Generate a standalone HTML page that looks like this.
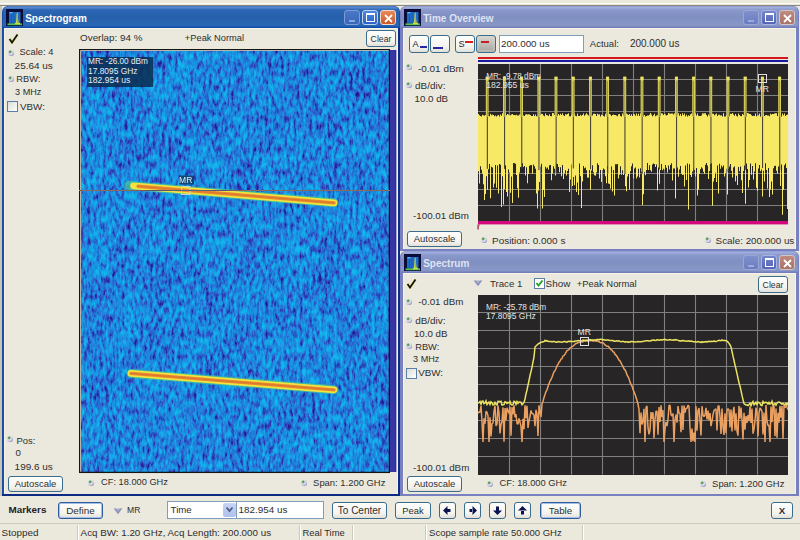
<!DOCTYPE html><html><head><meta charset="utf-8"><style>
*{margin:0;padding:0;box-sizing:border-box}
html,body{width:800px;height:540px;overflow:hidden;background:#ebe8dd;font-family:"Liberation Sans",sans-serif;color:#222}
.a{position:absolute}
.t{position:absolute;white-space:nowrap;line-height:1;color:#2e2e2e}
.btn{position:absolute;border:1px solid #3c6c8c;border-radius:3px;background:linear-gradient(#fefefc,#f4f3ee 70%,#e2e0d6);font-size:10px;color:#2a2a2a;text-align:center;white-space:nowrap;line-height:1}
.dot{position:absolute;width:6px;height:6px;border-radius:50%;background:radial-gradient(circle at 35% 30%,#2a8a3a 0,#70a868 16%,#e0e0f0 36%,#c8c4e0 60%,#5a54a8 88%,#6a64b0 100%)}
.chk{position:absolute;width:11px;height:11px;border:1px solid #5a7fa8;background:linear-gradient(135deg,#dcdcd6,#fff)}
.tb{position:absolute;width:16px;height:15px;border:1px solid #fff;border-radius:3px}
</style></head><body><div class="a" style="left:0;top:0;width:800px;height:6px;background:#ebe8dc"></div><div class="a" style="left:0;top:3px;width:800px;height:1px;background:#fcfaf4"></div><div class="a" style="left:0;top:5px;width:800px;height:1px;background:#8a8880"></div><div class="a" style="left:0;top:6px;width:2px;height:490px;background:#c8c4b8"></div><div class="a" style="left:2px;top:6px;width:398px;height:490px;background:#1a4ea6;border-radius:6px 6px 0 0"></div><div class="a" style="left:4px;top:28px;width:394px;height:466px;background:#ebe8dd;border-top:1px solid #f8f4e8;border-left:1px solid #f6f2e6;border-right:1px solid #f6f2e6"></div><div class="a" style="left:3px;top:6px;width:396px;height:22px;background:linear-gradient(#3c70c0 0,#5a8ad0 7%,#2c66b4 18%,#2660aa 50%,#2868b4 88%,#0c48a8 100%);border-radius:6px 6px 0 0"></div><svg class="a" style="left:6px;top:9px" width="17" height="17" viewBox="0 0 17 17">
<rect width="17" height="17" fill="#0c0c3a"/>
<rect x="3" y="3" width="11.5" height="11.5" fill="#1f6cc4"/>
<rect x="5" y="3.5" width="1" height="11" fill="#1a58b0"/>
<rect x="7.5" y="3.5" width="1" height="11" fill="#1a5cb4"/>
<rect x="3.5" y="3" width="3" height="1.4" fill="#5ab8f0"/>
<path d="M9.3 14.8 Q10.4 13.5 10.6 5 L11.2 3 L11.8 5 Q12 13.5 13.3 14.8Z" fill="#d8dc40"/>
<path d="M10.9 14 L11.1 5 L11.5 5 L11.6 14Z" fill="#40a0d8"/>
<rect x="1.5" y="14.4" width="14.5" height="1.8" fill="#58c050"/>
<rect x="9" y="14" width="5" height="1.3" fill="#c8e040"/>
</svg><div class="t" style="left:25.20px;top:14.04px;font-size:10.00px;color:#fff;font-weight:bold;letter-spacing:0px">Spectrogram</div><div class="tb" style="left:344px;top:10px;background:linear-gradient(#4a78c8,#3a66b8);border-color:#7f9cd4"><div class="a" style="left:4px;top:9px;width:6px;height:2px;background:#88a8dc"></div></div><div class="tb" style="left:362px;top:10px;background:linear-gradient(#4c86e0,#2c62c8);border-color:#c0d4f0"><div class="a" style="left:3px;top:2px;width:9px;height:9px;border:1px solid #fff;border-top-width:2px"></div></div><div class="tb" style="left:380px;top:10px;background:linear-gradient(#e88a5a,#c85a2a);border-color:#f4d8c8"><svg class="a" style="left:2px;top:1.5px" width="11" height="11"><path d="M2 2L9 9M9 2L2 9" stroke="#fff" stroke-width="1.8"/></svg></div><div class="a" style="left:398px;top:28px;width:2px;height:468px;background:#0c2c88"></div><div class="a" style="left:2px;top:494px;width:398px;height:2px;background:#0c2a84"></div><div class="a" style="left:400px;top:6px;width:399px;height:245px;background:#7880c0;border-radius:6px 6px 0 0"></div><div class="a" style="left:403px;top:28px;width:393px;height:221px;background:#ebe8dd;border-top:1px solid #f8f4e8;border-left:1px solid #f6f2e6;border-right:1px solid #f6f2e6"></div><div class="a" style="left:401px;top:6px;width:397px;height:22px;background:linear-gradient(#8a98d0 0,#a0aedc 7%,#8a98cc 18%,#7f8fc0 50%,#8898c8 88%,#6e78b8 100%);border-radius:6px 6px 0 0"></div><svg class="a" style="left:404px;top:9px" width="17" height="17" viewBox="0 0 17 17">
<rect width="17" height="17" fill="#0c0c3a"/>
<rect x="3" y="3" width="11.5" height="11.5" fill="#1f6cc4"/>
<rect x="5" y="3.5" width="1" height="11" fill="#1a58b0"/>
<rect x="7.5" y="3.5" width="1" height="11" fill="#1a5cb4"/>
<rect x="3.5" y="3" width="3" height="1.4" fill="#5ab8f0"/>
<path d="M9.3 14.8 Q10.4 13.5 10.6 5 L11.2 3 L11.8 5 Q12 13.5 13.3 14.8Z" fill="#d8dc40"/>
<path d="M10.9 14 L11.1 5 L11.5 5 L11.6 14Z" fill="#40a0d8"/>
<rect x="1.5" y="14.4" width="14.5" height="1.8" fill="#58c050"/>
<rect x="9" y="14" width="5" height="1.3" fill="#c8e040"/>
</svg><div class="t" style="left:423.20px;top:14.04px;font-size:10.00px;color:#dfe3f4;font-weight:bold;letter-spacing:0px">Time Overview</div><div class="tb" style="left:743px;top:10px;background:linear-gradient(#8090cc,#6a7cc0);border-color:#98a6d8"><div class="a" style="left:4px;top:9px;width:6px;height:2px;background:#a0acd8"></div></div><div class="tb" style="left:761px;top:10px;background:linear-gradient(#7484cc,#5464b8);border-color:#a8b4e0"><div class="a" style="left:3px;top:2px;width:9px;height:9px;border:1px solid #fff;border-top-width:2px"></div></div><div class="tb" style="left:779px;top:10px;background:linear-gradient(#c08a80,#a87266);border-color:#d8c4c4"><svg class="a" style="left:2px;top:1.5px" width="11" height="11"><path d="M2 2L9 9M9 2L2 9" stroke="#fff" stroke-width="1.8"/></svg></div><div class="a" style="left:400px;top:251px;width:399px;height:245px;background:#7880c0;border-radius:6px 6px 0 0"></div><div class="a" style="left:403px;top:273px;width:393px;height:221px;background:#ebe8dd;border-top:1px solid #f8f4e8;border-left:1px solid #f6f2e6;border-right:1px solid #f6f2e6"></div><div class="a" style="left:401px;top:251px;width:397px;height:22px;background:linear-gradient(#8a98d0 0,#a0aedc 7%,#8a98cc 18%,#7f8fc0 50%,#8898c8 88%,#6e78b8 100%);border-radius:6px 6px 0 0"></div><svg class="a" style="left:404px;top:254px" width="17" height="17" viewBox="0 0 17 17">
<rect width="17" height="17" fill="#0c0c3a"/>
<rect x="3" y="3" width="11.5" height="11.5" fill="#1f6cc4"/>
<rect x="5" y="3.5" width="1" height="11" fill="#1a58b0"/>
<rect x="7.5" y="3.5" width="1" height="11" fill="#1a5cb4"/>
<rect x="3.5" y="3" width="3" height="1.4" fill="#5ab8f0"/>
<path d="M9.3 14.8 Q10.4 13.5 10.6 5 L11.2 3 L11.8 5 Q12 13.5 13.3 14.8Z" fill="#d8dc40"/>
<path d="M10.9 14 L11.1 5 L11.5 5 L11.6 14Z" fill="#40a0d8"/>
<rect x="1.5" y="14.4" width="14.5" height="1.8" fill="#58c050"/>
<rect x="9" y="14" width="5" height="1.3" fill="#c8e040"/>
</svg><div class="t" style="left:423.20px;top:259.04px;font-size:10.00px;color:#dfe3f4;font-weight:bold;letter-spacing:0px">Spectrum</div><div class="tb" style="left:743px;top:255px;background:linear-gradient(#8090cc,#6a7cc0);border-color:#98a6d8"><div class="a" style="left:4px;top:9px;width:6px;height:2px;background:#a0acd8"></div></div><div class="tb" style="left:761px;top:255px;background:linear-gradient(#7484cc,#5464b8);border-color:#a8b4e0"><div class="a" style="left:3px;top:2px;width:9px;height:9px;border:1px solid #fff;border-top-width:2px"></div></div><div class="tb" style="left:779px;top:255px;background:linear-gradient(#c08a80,#a87266);border-color:#d8c4c4"><svg class="a" style="left:2px;top:1.5px" width="11" height="11"><path d="M2 2L9 9M9 2L2 9" stroke="#fff" stroke-width="1.8"/></svg></div><svg class="a" style="left:7.5px;top:33px" width="11" height="11"><path d="M1.5 6 L4 9.5 L9.5 1.5" fill="none" stroke="#d8c800" stroke-width="2.6" opacity=".55"/><path d="M1.5 6 L4 9.5 L9.5 1.5" fill="none" stroke="#101010" stroke-width="1.6"/></svg><div class="dot" style="left:8px;top:50px"></div><div class="t" style="left:19.60px;top:47.58px;font-size:9.35px;">Scale: 4</div><div class="t" style="left:14.60px;top:60.55px;font-size:9.98px;">25.64 us</div><div class="dot" style="left:8px;top:76px"></div><div class="t" style="left:16.35px;top:75.13px;font-size:9.29px;">RBW:</div><div class="t" style="left:15.10px;top:88.29px;font-size:9.10px;">3 MHz</div><div class="chk" style="left:7px;top:101px"></div><div class="t" style="left:20.10px;top:101.73px;font-size:9.77px;">VBW:</div><div class="t" style="left:80.10px;top:33.18px;font-size:9.83px;">Overlap: 94 %</div><div class="t" style="left:184.85px;top:33.61px;font-size:9.32px;">+Peak Normal</div><div class="btn" style="left:366px;top:30px;width:30px;height:17px;"><div class="t" style="left:0;width:100%;top:4.13px;font-size:8.70px;text-align:center">Clear</div></div><div class="dot" style="left:7px;top:436px"></div><div class="t" style="left:16.60px;top:436.05px;font-size:9.40px;">Pos:</div><div class="t" style="left:15.60px;top:447.79px;font-size:9.70px;">0</div><div class="t" style="left:14.60px;top:461.55px;font-size:9.98px;">199.6 us</div><div class="btn" style="left:8px;top:476px;width:55px;height:16px;"><div class="t" style="left:0;width:100%;top:2.06px;font-size:9.50px;text-align:center">Autoscale</div></div><div class="dot" style="left:88px;top:480px"></div><div class="t" style="left:101.10px;top:478.17px;font-size:9.25px;">CF: 18.000 GHz</div><div class="dot" style="left:301px;top:480px"></div><div class="t" style="left:313.10px;top:478.02px;font-size:9.43px;">Span: 1.200 GHz</div><svg class="a" style="left:79px;top:49px" width="318" height="425" viewBox="79 49 318 425">
<defs>
<filter id="nz" x="0" y="0" width="100%" height="100%" color-interpolation-filters="sRGB">
<feTurbulence type="fractalNoise" baseFrequency="0.32 0.13" numOctaves="3" seed="5" result="f0"/>
<feColorMatrix in="f0" type="matrix" values="1 0 0 0 0  1 0 0 0 0  1 0 0 0 0  0 0 0 0 1" result="f"/>
<feTurbulence type="fractalNoise" baseFrequency="0.035 0.03" numOctaves="2" seed="9" result="c0"/>
<feColorMatrix in="c0" type="matrix" values="1 0 0 0 0  1 0 0 0 0  1 0 0 0 0  0 0 0 0 1" result="c"/>
<feComposite in="f" in2="c" operator="arithmetic" k1="0" k2="0.9" k3="0.25" k4="-0.075" result="m"/>
<feColorMatrix in="m" type="matrix" values="1.7 0 0 0 -0.31  1.7 0 0 0 -0.31  1.7 0 0 0 -0.31  0 0 0 0 1"/>
<feComponentTransfer>
<feFuncR type="table" tableValues="0.14 0.18 0.15 0.11 0.08 0.07"/>
<feFuncG type="table" tableValues="0.10 0.26 0.43 0.56 0.65 0.73"/>
<feFuncB type="table" tableValues="0.55 0.72 0.83 0.88 0.91 0.93"/>
</feComponentTransfer>
<feGaussianBlur stdDeviation="0.45"/>
</filter>
<filter id="bl" x="-10%" y="-100%" width="120%" height="300%"><feGaussianBlur stdDeviation="0.7"/></filter>
</defs>
<rect x="81" y="51" width="309" height="421" filter="url(#nz)"/>
<rect x="390" y="50" width="6" height="422" fill="#3836a6"/><rect x="395.5" y="50" width="0.8" height="422" fill="#1a2890"/>
<rect x="79.6" y="49.6" width="309.8" height="422.8" fill="none" stroke="#151515" stroke-width="1.3"/>
<g filter="url(#bl)"><line x1="129.0" y1="185.50" x2="334" y2="202.85" stroke="#44c49a" stroke-width="9" stroke-linecap="round" opacity="0.8"/><line x1="133.5" y1="185.87" x2="334" y2="202.85" stroke="#f2e43e" stroke-width="6.6" stroke-linecap="round" opacity="1"/><line x1="138.0" y1="186.25" x2="334" y2="202.85" stroke="#e68a32" stroke-width="3.4" stroke-linecap="round" opacity="1"/><line x1="138.0" y1="186.25" x2="334" y2="202.85" stroke="#dc7028" stroke-width="1.2" stroke-linecap="round" opacity="0.7"/><line x1="131.0" y1="373.40" x2="334" y2="389.85" stroke="#44c49a" stroke-width="9" stroke-linecap="round" opacity="0.8"/><line x1="131.0" y1="373.40" x2="334" y2="389.85" stroke="#f2e43e" stroke-width="6.6" stroke-linecap="round" opacity="1"/><line x1="131.0" y1="373.40" x2="334" y2="389.85" stroke="#e68a32" stroke-width="3.4" stroke-linecap="round" opacity="1"/><line x1="131.0" y1="373.40" x2="334" y2="389.85" stroke="#dc7028" stroke-width="1.2" stroke-linecap="round" opacity="0.7"/></g>

<rect x="87" y="57" width="66" height="30" fill="#0a2c50" opacity=".85"/>
<rect x="179" y="175.5" width="15" height="9" fill="#0c3860" opacity=".8"/>
<rect x="181.5" y="186.5" width="8.5" height="8" fill="none" stroke="#d0d0d0" stroke-width="1"/>
</svg><div class="t" style="left:88.10px;top:58.05px;font-size:8.21px;color:#e8eef4;">MR: -26.00 dBm</div><div class="t" style="left:88.10px;top:67.42px;font-size:8.37px;color:#e8eef4;">17.8095 GHz</div><div class="t" style="left:88.10px;top:76.16px;font-size:8.55px;color:#e8eef4;">182.954 us</div><div class="t" style="left:179.10px;top:176.30px;font-size:8.50px;color:#e8eef4;">MR</div><div class="a" style="left:79px;top:190px;width:311px;height:1px;background:#e8e0e0;mix-blend-mode:difference;opacity:.65"></div><div class="btn" style="left:409px;top:35px;width:20px;height:18px;background:linear-gradient(#fefefc,#f4f3ee 70%,#e2e0d6);text-align:left"><div class="t" style="left:2.60px;top:4.21px;font-size:9.20px;color:#1e1e1e;">A</div><div class="a" style="left:9.5px;top:10px;width:7.5px;height:2px;background:#2828a0"></div></div><div class="btn" style="left:430px;top:35px;width:20px;height:18px;background:linear-gradient(#fefefc,#f4f3ee 70%,#e2e0d6);text-align:left"><div class="a" style="left:1.5px;top:11px;width:10px;height:2px;background:#2828a0"></div></div><div class="btn" style="left:455px;top:35px;width:20px;height:18px;background:linear-gradient(#fefefc,#f4f3ee 70%,#e2e0d6);text-align:left"><div class="t" style="left:2.60px;top:4.21px;font-size:9.20px;color:#1e1e1e;">S</div><div class="a" style="left:9px;top:4.5px;width:8px;height:2px;background:#d82020"></div></div><div class="btn" style="left:476px;top:35px;width:20px;height:18px;background:linear-gradient(#d8d6d0,#b8b6b0);text-align:left"><div class="a" style="left:2px;top:2px;width:14px;height:12px;background:linear-gradient(#d4d2cc,#aeaca6)"></div><div class="a" style="left:4px;top:4.5px;width:8px;height:2px;background:#c82020"></div></div><div class="a" style="left:499px;top:35px;width:85px;height:18px;border:1px solid #7f9db9;background:#fff"></div><div class="t" style="left:501.10px;top:38.99px;font-size:9.82px;">200.000 us</div><div class="t" style="left:589.80px;top:39.44px;font-size:9.52px;">Actual:</div><div class="t" style="left:629.90px;top:39.03px;font-size:10.00px;">200.000 us</div><div class="dot" style="left:406px;top:64px"></div><div class="t" style="left:417.90px;top:63.76px;font-size:9.97px;">-0.01 dBm</div><div class="dot" style="left:406px;top:82px"></div><div class="t" style="left:415.10px;top:80.81px;font-size:9.91px;">dB/div:</div><div class="t" style="left:414.60px;top:94.17px;font-size:9.72px;">10.0 dB</div><div class="t" style="left:413.10px;top:210.75px;font-size:9.75px;">-100.01 dBm</div><div class="btn" style="left:407px;top:231px;width:55px;height:16px;"><div class="t" style="left:0;width:100%;top:2.06px;font-size:9.50px;text-align:center">Autoscale</div></div><div class="dot" style="left:481px;top:237px"></div><div class="t" style="left:492.10px;top:235.61px;font-size:9.91px;">Position: 0.000 s</div><div class="dot" style="left:704.5px;top:237px"></div><div class="t" style="left:715.60px;top:235.67px;font-size:9.84px;">Scale: 200.000 us</div><svg class="a" style="left:470px;top:50px" width="330" height="180" viewBox="470 50 330 180">
<rect x="478" y="57" width="310" height="2" fill="#d81818"/>
<rect x="478" y="60" width="310" height="2" fill="#1818a0"/>
<rect x="478" y="64" width="310" height="157" fill="#272526"/>
<g stroke="#808080" stroke-width="1.1"><line x1="509.5" y1="64" x2="509.5" y2="221"/><line x1="540.5" y1="64" x2="540.5" y2="221"/><line x1="571.5" y1="64" x2="571.5" y2="221"/><line x1="602.5" y1="64" x2="602.5" y2="221"/><line x1="633.5" y1="64" x2="633.5" y2="221"/><line x1="664.5" y1="64" x2="664.5" y2="221"/><line x1="695.5" y1="64" x2="695.5" y2="221"/><line x1="726.5" y1="64" x2="726.5" y2="221"/><line x1="757.5" y1="64" x2="757.5" y2="221"/><line x1="478" y1="79.5" x2="788" y2="79.5"/><line x1="478" y1="95.5" x2="788" y2="95.5"/><line x1="478" y1="111.5" x2="788" y2="111.5"/><line x1="478" y1="126.5" x2="788" y2="126.5"/><line x1="478" y1="142.5" x2="788" y2="142.5"/><line x1="478" y1="158.5" x2="788" y2="158.5"/><line x1="478" y1="173.5" x2="788" y2="173.5"/><line x1="478" y1="189.5" x2="788" y2="189.5"/><line x1="478" y1="205.5" x2="788" y2="205.5"/></g>
<polygon points="478,113.9 479,113.9 479,115.2 480,115.2 480,116.0 481,116.0 481,116.6 482,116.6 482,114.7 483,114.7 483,115.3 484,115.3 484,115.7 485,115.7 485,115.1 486,115.1 486,114.7 487,114.7 487,115.6 488,115.6 488,115.9 489,115.9 489,116.2 490,116.2 490,113.8 491,113.8 491,115.3 492,115.3 492,114.4 493,114.4 493,115.1 494,115.1 494,116.3 495,116.3 495,115.4 496,115.4 496,116.5 497,116.5 497,115.6 498,115.6 498,115.1 499,115.1 499,116.6 500,116.6 500,114.5 501,114.5 501,115.8 502,115.8 502,113.2 503,113.2 503,116.2 504,116.2 504,116.6 505,116.6 505,113.1 506,113.1 506,115.2 507,115.2 507,114.1 508,114.1 508,114.4 509,114.4 509,115.3 510,115.3 510,115.2 511,115.2 511,114.6 512,114.6 512,114.1 513,114.1 513,115.0 514,115.0 514,115.1 515,115.1 515,115.3 516,115.3 516,114.7 517,114.7 517,115.5 518,115.5 518,115.4 519,115.4 519,114.6 520,114.6 520,114.3 521,114.3 521,115.1 522,115.1 522,115.8 523,115.8 523,115.6 524,115.6 524,115.9 525,115.9 525,114.6 526,114.6 526,114.2 527,114.2 527,114.6 528,114.6 528,114.2 529,114.2 529,114.6 530,114.6 530,114.9 531,114.9 531,116.0 532,116.0 532,115.9 533,115.9 533,114.2 534,114.2 534,115.9 535,115.9 535,114.5 536,114.5 536,116.3 537,116.3 537,116.2 538,116.2 538,116.4 539,116.4 539,115.7 540,115.7 540,114.9 541,114.9 541,113.8 542,113.8 542,114.0 543,114.0 543,115.5 544,115.5 544,116.2 545,116.2 545,113.6 546,113.6 546,114.9 547,114.9 547,115.2 548,115.2 548,116.1 549,116.1 549,114.3 550,114.3 550,115.9 551,115.9 551,116.3 552,116.3 552,113.0 553,113.0 553,113.2 554,113.2 554,114.9 555,114.9 555,115.8 556,115.8 556,113.4 557,113.4 557,116.1 558,116.1 558,114.1 559,114.1 559,115.3 560,115.3 560,113.7 561,113.7 561,115.0 562,115.0 562,113.3 563,113.3 563,115.2 564,115.2 564,115.9 565,115.9 565,114.3 566,114.3 566,114.5 567,114.5 567,113.9 568,113.9 568,113.3 569,113.3 569,116.2 570,116.2 570,116.2 571,116.2 571,114.7 572,114.7 572,115.4 573,115.4 573,115.4 574,115.4 574,113.4 575,113.4 575,115.8 576,115.8 576,116.2 577,116.2 577,113.4 578,113.4 578,116.0 579,116.0 579,115.9 580,115.9 580,114.8 581,114.8 581,115.7 582,115.7 582,115.0 583,115.0 583,113.6 584,113.6 584,115.7 585,115.7 585,114.4 586,114.4 586,113.3 587,113.3 587,114.5 588,114.5 588,115.5 589,115.5 589,114.9 590,114.9 590,116.2 591,116.2 591,116.3 592,116.3 592,115.6 593,115.6 593,113.7 594,113.7 594,113.8 595,113.8 595,114.1 596,114.1 596,116.1 597,116.1 597,113.8 598,113.8 598,114.4 599,114.4 599,114.2 600,114.2 600,116.6 601,116.6 601,114.7 602,114.7 602,115.0 603,115.0 603,116.1 604,116.1 604,116.5 605,116.5 605,113.8 606,113.8 606,116.5 607,116.5 607,113.7 608,113.7 608,115.5 609,115.5 609,113.9 610,113.9 610,114.5 611,114.5 611,116.0 612,116.0 612,115.1 613,115.1 613,114.6 614,114.6 614,115.1 615,115.1 615,115.0 616,115.0 616,115.4 617,115.4 617,116.3 618,116.3 618,114.3 619,114.3 619,114.1 620,114.1 620,115.9 621,115.9 621,116.5 622,116.5 622,113.4 623,113.4 623,115.6 624,115.6 624,113.7 625,113.7 625,113.6 626,113.6 626,113.4 627,113.4 627,114.2 628,114.2 628,115.0 629,115.0 629,114.1 630,114.1 630,115.7 631,115.7 631,114.3 632,114.3 632,116.1 633,116.1 633,113.9 634,113.9 634,114.2 635,114.2 635,115.8 636,115.8 636,113.4 637,113.4 637,115.8 638,115.8 638,113.7 639,113.7 639,115.9 640,115.9 640,113.5 641,113.5 641,114.9 642,114.9 642,113.9 643,113.9 643,116.2 644,116.2 644,115.0 645,115.0 645,116.5 646,116.5 646,116.1 647,116.1 647,115.6 648,115.6 648,115.4 649,115.4 649,114.7 650,114.7 650,113.1 651,113.1 651,114.6 652,114.6 652,116.2 653,116.2 653,115.2 654,115.2 654,113.8 655,113.8 655,116.3 656,116.3 656,115.5 657,115.5 657,115.2 658,115.2 658,115.7 659,115.7 659,116.4 660,116.4 660,115.7 661,115.7 661,113.2 662,113.2 662,113.6 663,113.6 663,114.9 664,114.9 664,114.1 665,114.1 665,114.4 666,114.4 666,115.6 667,115.6 667,114.9 668,114.9 668,113.0 669,113.0 669,113.5 670,113.5 670,113.8 671,113.8 671,113.6 672,113.6 672,113.6 673,113.6 673,114.6 674,114.6 674,113.2 675,113.2 675,113.1 676,113.1 676,113.3 677,113.3 677,115.2 678,115.2 678,113.2 679,113.2 679,115.8 680,115.8 680,114.1 681,114.1 681,115.9 682,115.9 682,113.3 683,113.3 683,115.1 684,115.1 684,113.6 685,113.6 685,116.2 686,116.2 686,114.7 687,114.7 687,116.4 688,116.4 688,115.2 689,115.2 689,116.1 690,116.1 690,114.2 691,114.2 691,113.6 692,113.6 692,116.0 693,116.0 693,114.3 694,114.3 694,115.8 695,115.8 695,113.6 696,113.6 696,115.6 697,115.6 697,113.6 698,113.6 698,115.7 699,115.7 699,116.0 700,116.0 700,116.1 701,116.1 701,115.6 702,115.6 702,113.3 703,113.3 703,113.4 704,113.4 704,113.3 705,113.3 705,113.2 706,113.2 706,115.1 707,115.1 707,116.5 708,116.5 708,114.5 709,114.5 709,115.8 710,115.8 710,113.6 711,113.6 711,113.4 712,113.4 712,113.7 713,113.7 713,113.8 714,113.8 714,115.3 715,115.3 715,114.2 716,114.2 716,113.4 717,113.4 717,115.9 718,115.9 718,114.7 719,114.7 719,114.7 720,114.7 720,115.6 721,115.6 721,115.2 722,115.2 722,116.6 723,116.6 723,113.3 724,113.3 724,116.4 725,116.4 725,116.6 726,116.6 726,114.9 727,114.9 727,116.3 728,116.3 728,115.8 729,115.8 729,116.3 730,116.3 730,113.7 731,113.7 731,114.1 732,114.1 732,113.1 733,113.1 733,114.6 734,114.6 734,115.7 735,115.7 735,114.1 736,114.1 736,115.7 737,115.7 737,116.5 738,116.5 738,113.6 739,113.6 739,114.9 740,114.9 740,116.1 741,116.1 741,116.2 742,116.2 742,113.9 743,113.9 743,114.9 744,114.9 744,113.2 745,113.2 745,114.7 746,114.7 746,116.5 747,116.5 747,113.0 748,113.0 748,113.2 749,113.2 749,113.9 750,113.9 750,113.9 751,113.9 751,115.3 752,115.3 752,115.9 753,115.9 753,115.7 754,115.7 754,116.0 755,116.0 755,113.6 756,113.6 756,116.2 757,116.2 757,115.4 758,115.4 758,115.2 759,115.2 759,113.6 760,113.6 760,116.6 761,116.6 761,114.3 762,114.3 762,114.6 763,114.6 763,114.1 764,114.1 764,116.1 765,116.1 765,115.2 766,115.2 766,115.0 767,115.0 767,115.6 768,115.6 768,115.4 769,115.4 769,116.2 770,116.2 770,113.7 771,113.7 771,114.4 772,114.4 772,114.0 773,114.0 773,114.1 774,114.1 774,113.5 775,113.5 775,113.3 776,113.3 776,113.3 777,113.3 777,116.0 778,116.0 778,113.0 779,113.0 779,113.2 780,113.2 780,114.0 781,114.0 781,116.4 782,116.4 782,113.6 783,113.6 783,115.3 784,115.3 784,113.6 785,113.6 785,116.1 786,116.1 786,114.9 787,114.9 787,114.4 788,114.4 788,209.0 787,209.0 787,168.1 786,168.1 786,163.5 785,163.5 785,165.2 784,165.2 784,189.8 783,189.8 783,214.8 782,214.8 782,164.6 781,164.6 781,186.0 780,186.0 780,166.3 779,166.3 779,166.5 778,166.5 778,173.5 777,173.5 777,170.8 776,170.8 776,165.7 775,165.7 775,166.0 774,166.0 774,168.2 773,168.2 773,194.4 772,194.4 772,181.5 771,181.5 771,189.6 770,189.6 770,196.9 769,196.9 769,167.9 768,167.9 768,188.5 767,188.5 767,170.0 766,170.0 766,163.3 765,163.3 765,181.5 764,181.5 764,170.8 763,170.8 763,196.6 762,196.6 762,169.4 761,169.4 761,171.3 760,171.3 760,165.1 759,165.1 759,168.6 758,168.6 758,190.7 757,190.7 757,187.8 756,187.8 756,163.2 755,163.2 755,171.4 754,171.4 754,179.4 753,179.4 753,166.0 752,166.0 752,174.8 751,174.8 751,163.5 750,163.5 750,180.0 749,180.0 749,187.5 748,187.5 748,168.9 747,168.9 747,163.4 746,163.4 746,203.7 745,203.7 745,165.4 744,165.4 744,171.1 743,171.1 743,192.9 742,192.9 742,180.3 741,180.3 741,166.5 740,166.5 740,171.2 739,171.2 739,166.9 738,166.9 738,184.9 737,184.9 737,175.7 736,175.7 736,181.6 735,181.6 735,166.6 734,166.6 734,167.4 733,167.4 733,177.4 732,177.4 732,170.7 731,170.7 731,164.1 730,164.1 730,166.6 729,166.6 729,168.5 728,168.5 728,194.4 727,194.4 727,168.7 726,168.7 726,172.9 725,172.9 725,176.6 724,176.6 724,165.6 723,165.6 723,167.3 722,167.3 722,165.5 721,165.5 721,168.8 720,168.8 720,163.8 719,163.8 719,193.6 718,193.6 718,165.4 717,165.4 717,181.9 716,181.9 716,172.7 715,172.7 715,178.0 714,178.0 714,181.6 713,181.6 713,205.8 712,205.8 712,163.3 711,163.3 711,163.9 710,163.9 710,171.0 709,171.0 709,179.0 708,179.0 708,165.6 707,165.6 707,163.1 706,163.1 706,164.7 705,164.7 705,174.0 704,174.0 704,171.8 703,171.8 703,168.4 702,168.4 702,167.3 701,167.3 701,169.3 700,169.3 700,173.8 699,173.8 699,189.6 698,189.6 698,195.4 697,195.4 697,168.1 696,168.1 696,176.4 695,176.4 695,169.9 694,169.9 694,168.6 693,168.6 693,171.5 692,171.5 692,177.1 691,177.1 691,175.0 690,175.0 690,164.3 689,164.3 689,209.6 688,209.6 688,163.4 687,163.4 687,180.1 686,180.1 686,165.4 685,165.4 685,186.5 684,186.5 684,174.8 683,174.8 683,175.0 682,175.0 682,173.4 681,173.4 681,166.0 680,166.0 680,169.6 679,169.6 679,176.7 678,176.7 678,167.5 677,167.5 677,169.8 676,169.8 676,198.4 675,198.4 675,168.4 674,168.4 674,168.5 673,168.5 673,180.5 672,180.5 672,163.3 671,163.3 671,165.0 670,165.0 670,169.5 669,169.5 669,165.5 668,165.5 668,172.5 667,172.5 667,167.8 666,167.8 666,165.1 665,165.1 665,169.6 664,169.6 664,168.8 663,168.8 663,170.2 662,170.2 662,163.9 661,163.9 661,170.0 660,170.0 660,183.8 659,183.8 659,167.4 658,167.4 658,190.5 657,190.5 657,164.5 656,164.5 656,167.1 655,167.1 655,163.9 654,163.9 654,163.5 653,163.5 653,164.5 652,164.5 652,171.8 651,171.8 651,170.3 650,170.3 650,165.3 649,165.3 649,170.1 648,170.1 648,163.0 647,163.0 647,169.9 646,169.9 646,175.2 645,175.2 645,172.2 644,172.2 644,194.3 643,194.3 643,205.0 642,205.0 642,171.8 641,171.8 641,168.3 640,168.3 640,177.5 639,177.5 639,168.7 638,168.7 638,176.6 637,176.6 637,178.6 636,178.6 636,167.6 635,167.6 635,168.4 634,168.4 634,178.4 633,178.4 633,163.5 632,163.5 632,166.2 631,166.2 631,171.2 630,171.2 630,189.4 629,189.4 629,173.9 628,173.9 628,176.4 627,176.4 627,191.2 626,191.2 626,186.2 625,186.2 625,173.9 624,173.9 624,174.9 623,174.9 623,170.2 622,170.2 622,174.7 621,174.7 621,166.2 620,166.2 620,174.8 619,174.8 619,178.5 618,178.5 618,164.1 617,164.1 617,164.3 616,164.3 616,164.3 615,164.3 615,195.6 614,195.6 614,170.0 613,170.0 613,191.5 612,191.5 612,166.6 611,166.6 611,188.6 610,188.6 610,184.0 609,184.0 609,183.5 608,183.5 608,166.1 607,166.1 607,183.2 606,183.2 606,176.3 605,176.3 605,169.6 604,169.6 604,168.4 603,168.4 603,169.9 602,169.9 602,181.9 601,181.9 601,169.9 600,169.9 600,178.6 599,178.6 599,165.0 598,165.0 598,163.2 597,163.2 597,172.2 596,172.2 596,175.8 595,175.8 595,175.3 594,175.3 594,172.3 593,172.3 593,165.2 592,165.2 592,170.6 591,170.6 591,189.7 590,189.7 590,169.9 589,169.9 589,177.8 588,177.8 588,177.4 587,177.4 587,170.3 586,170.3 586,167.5 585,167.5 585,168.3 584,168.3 584,166.0 583,166.0 583,181.5 582,181.5 582,208.1 581,208.1 581,176.2 580,176.2 580,163.4 579,163.4 579,195.0 578,195.0 578,182.5 577,182.5 577,191.9 576,191.9 576,175.5 575,175.5 575,185.2 574,185.2 574,176.9 573,176.9 573,185.9 572,185.9 572,164.4 571,164.4 571,179.4 570,179.4 570,191.9 569,191.9 569,168.8 568,168.8 568,171.1 567,171.1 567,175.4 566,175.4 566,170.2 565,170.2 565,173.2 564,173.2 564,179.0 563,179.0 563,165.1 562,165.1 562,176.2 561,176.2 561,167.2 560,167.2 560,172.3 559,172.3 559,167.0 558,167.0 558,163.9 557,163.9 557,163.7 556,163.7 556,175.6 555,175.6 555,168.8 554,168.8 554,166.3 553,166.3 553,173.4 552,173.4 552,180.2 551,180.2 551,165.0 550,165.0 550,165.3 549,165.3 549,169.8 548,169.8 548,167.4 547,167.4 547,168.6 546,168.6 546,166.7 545,166.7 545,196.9 544,196.9 544,190.0 543,190.0 543,208.5 542,208.5 542,163.7 541,163.7 541,166.6 540,166.6 540,182.0 539,182.0 539,190.5 538,190.5 538,208.5 537,208.5 537,193.6 536,193.6 536,168.7 535,168.7 535,166.3 534,166.3 534,164.5 533,164.5 533,173.8 532,173.8 532,165.1 531,165.1 531,165.2 530,165.2 530,165.7 529,165.7 529,174.0 528,174.0 528,183.3 527,183.3 527,167.3 526,167.3 526,175.6 525,175.6 525,165.9 524,165.9 524,166.9 523,166.9 523,163.3 522,163.3 522,166.8 521,166.8 521,166.9 520,166.9 520,172.4 519,172.4 519,197.7 518,197.7 518,188.3 517,188.3 517,174.9 516,174.9 516,163.7 515,163.7 515,163.2 514,163.2 514,163.1 513,163.1 513,203.0 512,203.0 512,176.4 511,176.4 511,192.7 510,192.7 510,172.5 509,172.5 509,169.5 508,169.5 508,196.5 507,196.5 507,192.1 506,192.1 506,165.3 505,165.3 505,188.9 504,188.9 504,204.4 503,204.4 503,176.3 502,176.3 502,206.9 501,206.9 501,164.7 500,164.7 500,164.0 499,164.0 499,193.6 498,193.6 498,165.5 497,165.5 497,187.7 496,187.7 496,164.9 495,164.9 495,183.4 494,183.4 494,187.6 493,187.6 493,167.5 492,167.5 492,166.8 491,166.8 491,198.3 490,198.3 490,164.1 489,164.1 489,169.2 488,169.2 488,189.7 487,189.7 487,176.3 486,176.3 486,194.1 485,194.1 485,199.9 484,199.9 484,184.3 483,184.3 483,173.7 482,173.7 482,169.7 481,169.7 481,166.2 480,166.2 480,183.6 479,183.6 479,171.3 478,171.3" fill="#f7e966"/>
<g fill="#4a4630"><rect x="486.8" y="100" width="1.1" height="68.8"/><rect x="504.0" y="100" width="1.1" height="68.9"/><rect x="521.2" y="100" width="1.1" height="68.8"/><rect x="538.4" y="100" width="1.1" height="70.1"/><rect x="555.6" y="100" width="1.1" height="73.5"/><rect x="572.8" y="100" width="1.1" height="68.5"/><rect x="590.0" y="100" width="1.1" height="69.2"/><rect x="607.2" y="100" width="1.1" height="73.6"/><rect x="624.4" y="100" width="1.1" height="74.0"/><rect x="641.6" y="100" width="1.1" height="73.9"/><rect x="658.8" y="100" width="1.1" height="69.5"/><rect x="676.0" y="100" width="1.1" height="70.1"/><rect x="693.2" y="100" width="1.1" height="73.7"/><rect x="710.4" y="100" width="1.1" height="70.9"/><rect x="727.6" y="100" width="1.1" height="72.2"/><rect x="744.8" y="100" width="1.1" height="69.9"/><rect x="762.0" y="100" width="1.1" height="68.1"/><rect x="779.2" y="100" width="1.1" height="70.1"/></g>
<g fill="#d8d058"><rect x="485.8" y="77" width="2.8" height="40"/><rect x="486.9" y="81" width="0.7" height="36" fill="#8a8440"/><rect x="485.7" y="76.6" width="3" height="3.2" fill="#eee464"/><rect x="503.0" y="77" width="2.8" height="40"/><rect x="504.1" y="81" width="0.7" height="36" fill="#8a8440"/><rect x="502.9" y="76.6" width="3" height="3.2" fill="#eee464"/><rect x="520.2" y="77" width="2.8" height="40"/><rect x="521.3" y="81" width="0.7" height="36" fill="#8a8440"/><rect x="520.1" y="76.6" width="3" height="3.2" fill="#eee464"/><rect x="537.4" y="77" width="2.8" height="40"/><rect x="538.5" y="81" width="0.7" height="36" fill="#8a8440"/><rect x="537.3" y="76.6" width="3" height="3.2" fill="#eee464"/><rect x="554.6" y="77" width="2.8" height="40"/><rect x="555.7" y="81" width="0.7" height="36" fill="#8a8440"/><rect x="554.5" y="76.6" width="3" height="3.2" fill="#eee464"/><rect x="571.8" y="77" width="2.8" height="40"/><rect x="572.9" y="81" width="0.7" height="36" fill="#8a8440"/><rect x="571.7" y="76.6" width="3" height="3.2" fill="#eee464"/><rect x="589.0" y="77" width="2.8" height="40"/><rect x="590.1" y="81" width="0.7" height="36" fill="#8a8440"/><rect x="588.9" y="76.6" width="3" height="3.2" fill="#eee464"/><rect x="606.2" y="77" width="2.8" height="40"/><rect x="607.3" y="81" width="0.7" height="36" fill="#8a8440"/><rect x="606.1" y="76.6" width="3" height="3.2" fill="#eee464"/><rect x="623.4" y="77" width="2.8" height="40"/><rect x="624.5" y="81" width="0.7" height="36" fill="#8a8440"/><rect x="623.3" y="76.6" width="3" height="3.2" fill="#eee464"/><rect x="640.6" y="77" width="2.8" height="40"/><rect x="641.7" y="81" width="0.7" height="36" fill="#8a8440"/><rect x="640.5" y="76.6" width="3" height="3.2" fill="#eee464"/><rect x="657.8" y="77" width="2.8" height="40"/><rect x="658.9" y="81" width="0.7" height="36" fill="#8a8440"/><rect x="657.7" y="76.6" width="3" height="3.2" fill="#eee464"/><rect x="675.0" y="77" width="2.8" height="40"/><rect x="676.1" y="81" width="0.7" height="36" fill="#8a8440"/><rect x="674.9" y="76.6" width="3" height="3.2" fill="#eee464"/><rect x="692.2" y="77" width="2.8" height="40"/><rect x="693.3" y="81" width="0.7" height="36" fill="#8a8440"/><rect x="692.1" y="76.6" width="3" height="3.2" fill="#eee464"/><rect x="709.4" y="77" width="2.8" height="40"/><rect x="710.5" y="81" width="0.7" height="36" fill="#8a8440"/><rect x="709.3" y="76.6" width="3" height="3.2" fill="#eee464"/><rect x="726.6" y="77" width="2.8" height="40"/><rect x="727.7" y="81" width="0.7" height="36" fill="#8a8440"/><rect x="726.5" y="76.6" width="3" height="3.2" fill="#eee464"/><rect x="743.8" y="77" width="2.8" height="40"/><rect x="744.9" y="81" width="0.7" height="36" fill="#8a8440"/><rect x="743.7" y="76.6" width="3" height="3.2" fill="#eee464"/><rect x="761.0" y="77" width="2.8" height="40"/><rect x="762.1" y="81" width="0.7" height="36" fill="#8a8440"/><rect x="760.9" y="76.6" width="3" height="3.2" fill="#eee464"/><rect x="778.2" y="77" width="2.8" height="40"/><rect x="779.3" y="81" width="0.7" height="36" fill="#8a8440"/><rect x="778.1" y="76.6" width="3" height="3.2" fill="#eee464"/></g>
<rect x="478" y="221" width="310" height="3.4" fill="#d4087e"/><rect x="477.3" y="224.5" width="1.6" height="5" fill="#b04868"/><rect x="478" y="224.5" width="2" height="1.2" fill="#c05878"/>
<rect x="758.5" y="74.5" width="8" height="8" fill="none" stroke="#e0e0e0"/>
</svg><div class="t" style="left:486.20px;top:72.50px;font-size:8.15px;color:#e4e4e4;">MR: -9.78 dBm</div><div class="t" style="left:486.20px;top:81.28px;font-size:8.65px;color:#e4e4e4;">182.955 us</div><div class="t" style="left:755.60px;top:84.80px;font-size:8.50px;color:#e4e4e4;">MR</div><svg class="a" style="left:406px;top:277.5px" width="11" height="11"><path d="M1.5 6 L4 9.5 L9.5 1.5" fill="none" stroke="#d8c800" stroke-width="2.6" opacity=".55"/><path d="M1.5 6 L4 9.5 L9.5 1.5" fill="none" stroke="#101010" stroke-width="1.6"/></svg><svg class="a" style="left:472.5px;top:280px" width="10" height="7"><path d="M0.5 0.5 L9.5 0.5 L5 6.5Z" fill="#a8acc8"/><path d="M2 0.5 L5 5 L8 0.5" fill="none" stroke="#8088b0" stroke-width="1"/></svg><div class="t" style="left:489.90px;top:279.29px;font-size:9.69px;">Trace 1</div><div class="chk" style="left:534px;top:278px;background:#fff"></div><svg class="a" style="left:535px;top:279px" width="9" height="9"><path d="M1.5 4 L3.5 6.5 L7.5 1.5" fill="none" stroke="#21a121" stroke-width="1.8"/></svg><div class="t" style="left:545.60px;top:279.11px;font-size:9.91px;">Show</div><div class="t" style="left:576.80px;top:278.83px;font-size:9.41px;">+Peak Normal</div><div class="btn" style="left:758px;top:276px;width:30px;height:17px;"><div class="t" style="left:0;width:100%;top:4.13px;font-size:8.70px;text-align:center">Clear</div></div><div class="dot" style="left:406px;top:299px"></div><div class="t" style="left:418.30px;top:297.32px;font-size:9.78px;">-0.01 dBm</div><div class="dot" style="left:406px;top:317px"></div><div class="t" style="left:415.20px;top:315.91px;font-size:9.91px;">dB/div:</div><div class="t" style="left:413.90px;top:329.07px;font-size:9.72px;">10.0 dB</div><div class="dot" style="left:406px;top:343px"></div><div class="t" style="left:415.20px;top:343.13px;font-size:9.29px;">RBW:</div><div class="t" style="left:413.10px;top:355.49px;font-size:9.10px;">3 MHz</div><div class="chk" style="left:406px;top:368px"></div><div class="t" style="left:418.30px;top:368.43px;font-size:9.77px;">VBW:</div><div class="t" style="left:413.10px;top:462.68px;font-size:9.83px;">-100.01 dBm</div><div class="btn" style="left:407px;top:476px;width:55px;height:16px;"><div class="t" style="left:0;width:100%;top:2.06px;font-size:9.50px;text-align:center">Autoscale</div></div><div class="dot" style="left:487px;top:481px"></div><div class="t" style="left:499.60px;top:479.11px;font-size:9.32px;">CF: 18.000 GHz</div><div class="dot" style="left:699.5px;top:481px"></div><div class="t" style="left:712.10px;top:479.02px;font-size:9.43px;">Span: 1.200 GHz</div><svg class="a" style="left:478px;top:295px" width="310" height="180" viewBox="478 295 310 180">
<rect x="478" y="295" width="310" height="180" fill="#272526"/>
<g stroke="#808080" stroke-width="1.1"><line x1="509.5" y1="294.5" x2="509.5" y2="474.5"/><line x1="540.5" y1="294.5" x2="540.5" y2="474.5"/><line x1="571.5" y1="294.5" x2="571.5" y2="474.5"/><line x1="602.5" y1="294.5" x2="602.5" y2="474.5"/><line x1="633.5" y1="294.5" x2="633.5" y2="474.5"/><line x1="664.5" y1="294.5" x2="664.5" y2="474.5"/><line x1="695.5" y1="294.5" x2="695.5" y2="474.5"/><line x1="726.5" y1="294.5" x2="726.5" y2="474.5"/><line x1="757.5" y1="294.5" x2="757.5" y2="474.5"/><line x1="478" y1="312.5" x2="788" y2="312.5"/><line x1="478" y1="330.5" x2="788" y2="330.5"/><line x1="478" y1="348.5" x2="788" y2="348.5"/><line x1="478" y1="366.5" x2="788" y2="366.5"/><line x1="478" y1="384.5" x2="788" y2="384.5"/><line x1="478" y1="402.5" x2="788" y2="402.5"/><line x1="478" y1="420.5" x2="788" y2="420.5"/><line x1="478" y1="438.5" x2="788" y2="438.5"/><line x1="478" y1="456.5" x2="788" y2="456.5"/></g>
<polyline points="478,413.2 479,412.1 480,412.2 481,406.0 482,421.6 483,442.0 484,418.4 485,423.8 486,411.2 487,412.3 488,415.9 489,442.0 490,417.3 491,436.4 492,423.7 493,423.0 494,411.3 495,405.8 496,426.0 497,423.9 498,405.6 499,413.2 500,433.4 501,424.5 502,421.3 503,407.4 504,441.7 505,408.0 506,420.2 507,407.8 508,411.0 509,413.5 510,406.7 511,435.7 512,407.2 513,414.3 514,405.4 515,417.2 516,414.1 517,423.5 518,424.1 519,418.4 520,422.2 521,426.7 522,442.0 523,418.8 524,429.1 525,405.2 526,418.1 527,405.8 528,428.0 529,420.8 530,416.6 531,410.4 532,413.5 533,413.7 534,415.2 535,426.2 536,409.9 537,413.7 538,436.0 539,405.3 540,411.6 541,417.0 542,404.1 543,401.4 544,397.5 545,394.6 546,391.6 547,389.8 548,386.5 549,383.7 550,381.1 551,379.5 552,377.3 553,374.6 554,371.8 555,370.7 556,368.5 557,366.0 558,364.4 559,362.3 560,361.2 561,359.2 562,358.6 563,355.9 564,355.6 565,354.1 566,352.3 567,350.7 568,350.2 569,349.7 570,347.8 571,347.5 572,346.7 573,346.2 574,345.3 575,344.4 576,343.1 577,343.6 578,342.5 579,342.6 580,342.1 581,341.5 582,341.9 583,341.7 584,340.4 585,341.0 586,340.5 587,341.1 588,341.2 589,340.7 590,340.8 591,340.7 592,340.1 593,341.3 594,340.7 595,340.5 596,341.4 597,340.5 598,341.4 599,341.6 600,342.4 601,342.8 602,342.5 603,342.8 604,343.8 605,344.9 606,345.7 607,346.4 608,346.1 609,347.1 610,348.5 611,349.7 612,350.0 613,351.8 614,352.1 615,354.4 616,355.2 617,356.5 618,358.1 619,360.1 620,360.9 621,362.8 622,364.8 623,366.4 624,368.9 625,369.9 626,371.8 627,374.9 628,376.7 629,378.6 630,382.1 631,384.4 632,386.1 633,389.5 634,391.8 635,394.3 636,397.3 637,400.5 638,404.0 639,409.7 640,433.2 641,412.5 642,424.4 643,421.6 644,408.8 645,442.0 646,407.7 647,406.0 648,427.7 649,434.4 650,430.1 651,412.0 652,418.9 653,412.2 654,438.2 655,419.5 656,411.2 657,411.3 658,434.8 659,407.0 660,422.0 661,405.2 662,417.2 663,410.2 664,442.0 665,429.2 666,421.9 667,426.2 668,419.5 669,405.7 670,405.1 671,414.8 672,416.0 673,413.4 674,442.0 675,419.3 676,414.6 677,422.7 678,406.0 679,413.0 680,413.4 681,432.3 682,405.5 683,429.9 684,405.6 685,412.5 686,408.4 687,408.3 688,405.1 689,406.7 690,427.8 691,442.0 692,428.6 693,441.2 694,432.7 695,442.0 696,406.2 697,430.7 698,410.8 699,408.0 700,420.0 701,435.5 702,406.2 703,414.8 704,416.6 705,415.0 706,407.9 707,419.5 708,410.5 709,420.1 710,413.0 711,426.2 712,420.9 713,414.8 714,410.5 715,409.6 716,408.9 717,430.4 718,406.0 719,405.9 720,416.6 721,433.9 722,408.6 723,426.6 724,435.0 725,413.4 726,433.1 727,410.8 728,408.6 729,410.1 730,427.5 731,409.6 732,431.5 733,412.8 734,406.9 735,430.4 736,413.4 737,431.1 738,435.7 739,405.9 740,418.7 741,407.5 742,419.5 743,439.5 744,412.7 745,429.6 746,416.0 747,422.9 748,415.2 749,421.2 750,406.6 751,422.9 752,408.5 753,433.6 754,429.0 755,420.6 756,407.5 757,414.0 758,436.2 759,412.9 760,408.0 761,409.2 762,411.6 763,434.5 764,412.5 765,442.0 766,405.1 767,420.9 768,425.7 769,425.3 770,442.0 771,406.6 772,422.2 773,405.9 774,406.0 775,436.1 776,408.6 777,437.8 778,412.8 779,422.8 780,405.8 781,417.6 782,406.1 783,439.1 784,405.1 785,407.7 786,405.1 787,407.3 788,409.7" fill="none" stroke="#eaa060" stroke-width="1.5" stroke-linejoin="bevel"/>
<polyline points="478,402.8 479,402.8 480,401.6 481,404.3 482,401.2 483,401.0 484,403.7 485,403.1 486,400.9 487,404.5 488,403.0 489,402.0 490,404.5 491,401.8 492,402.6 493,405.0 494,404.8 495,402.5 496,404.2 497,405.0 498,401.2 499,401.6 500,401.6 501,401.3 502,405.1 503,404.7 504,404.6 505,401.7 506,402.2 507,403.4 508,402.4 509,402.9 510,401.6 511,404.4 512,404.9 513,404.7 514,401.3 515,401.8 516,404.4 517,401.6 518,403.3 519,402.0 520,402.0 521,402.4 522,404.7 523,403.8 524,402.4 525,399.0 526,393.9 527,390.0 528,385.1 529,380.5 530,375.5 531,371.6 532,367.1 533,361.9 534,357.0 535,347.0 536,346.0 537,345.0 538,344.2 539,343.5 540,342.9 541,342.4 542,342.0 543,341.7 544,341.6 545,340.3 546,341.1 547,340.7 548,341.3 549,341.6 550,341.5 551,341.4 552,341.9 553,341.5 554,341.5 555,341.7 556,342.2 557,342.3 558,341.6 559,341.7 560,341.9 561,342.0 562,342.3 563,341.9 564,341.5 565,341.5 566,342.0 567,342.2 568,341.5 569,341.3 570,341.5 571,341.2 572,341.5 573,341.6 574,341.8 575,341.0 576,340.9 577,341.0 578,340.6 579,340.7 580,340.8 581,340.9 582,340.8 583,340.0 584,340.6 585,340.2 586,340.5 587,340.1 588,340.3 589,339.9 590,339.5 591,340.1 592,339.9 593,340.1 594,340.1 595,339.9 596,340.0 597,339.4 598,339.5 599,339.9 600,339.2 601,339.2 602,339.4 603,340.1 604,339.5 605,340.1 606,340.2 607,340.1 608,339.8 609,340.3 610,340.6 611,340.5 612,340.6 613,340.6 614,341.2 615,341.2 616,341.0 617,340.8 618,341.2 619,340.8 620,341.4 621,341.8 622,341.6 623,341.2 624,341.7 625,342.2 626,341.8 627,341.8 628,342.3 629,341.8 630,342.1 631,341.6 632,341.5 633,341.7 634,341.8 635,342.1 636,342.1 637,341.9 638,341.5 639,341.7 640,341.7 641,341.7 642,341.6 643,341.6 644,341.1 645,340.9 646,340.7 647,340.7 648,340.8 649,340.9 650,341.1 651,340.8 652,340.1 653,340.4 654,339.9 655,340.6 656,340.5 657,339.8 658,339.8 659,340.2 660,340.0 661,339.7 662,340.0 663,339.8 664,339.6 665,339.4 666,339.9 667,340.0 668,339.9 669,339.9 670,339.6 671,339.9 672,340.2 673,340.0 674,339.8 675,340.2 676,339.6 677,339.9 678,340.1 679,340.8 680,340.9 681,340.7 682,340.9 683,340.4 684,341.0 685,340.9 686,341.0 687,341.3 688,341.1 689,340.9 690,341.4 691,341.1 692,341.2 693,341.7 694,341.8 695,341.8 696,342.0 697,341.9 698,341.6 699,341.9 700,341.9 701,342.5 702,341.7 703,342.3 704,341.7 705,342.0 706,341.5 707,342.2 708,341.5 709,341.3 710,341.8 711,341.4 712,341.6 713,341.6 714,340.9 715,341.4 716,341.5 717,341.1 718,340.6 719,340.2 720,340.5 721,340.7 722,339.9 723,340.4 724,340.4 725,340.5 726,340.7 727,341.2 728,342.1 729,343.4 730,345.0 731,346.8 732,351.3 733,356.2 734,360.3 735,365.1 736,369.1 737,373.6 738,378.1 739,382.7 740,386.2 741,390.7 742,395.4 743,399.6 744,403.5 745,404.4 746,404.9 747,404.8 748,405.5 749,404.4 750,403.2 751,405.7 752,403.2 753,401.6 754,404.7 755,403.9 756,402.1 757,404.5 758,402.1 759,402.7 760,403.4 761,405.3 762,405.5 763,401.5 764,403.0 765,402.5 766,402.3 767,402.9 768,404.0 769,402.4 770,404.1 771,403.7 772,401.3 773,404.9 774,404.5 775,403.4 776,405.1 777,403.1 778,402.2 779,402.0 780,402.7 781,403.4 782,404.3 783,403.3 784,404.2 785,404.4 786,403.3 787,404.8 788,402.6" fill="none" stroke="#ece460" stroke-width="1.5"/>
<rect x="580.5" y="337.5" width="8" height="8" fill="none" stroke="#e0e0e0"/>
</svg><div class="t" style="left:486.00px;top:303.79px;font-size:8.28px;color:#e4e4e4;">MR: -25.78 dBm</div><div class="t" style="left:486.00px;top:312.45px;font-size:8.45px;color:#e4e4e4;">17.8095 GHz</div><div class="t" style="left:577.60px;top:327.80px;font-size:8.50px;color:#e4e4e4;">MR</div><div class="t" style="left:8.60px;top:505.16px;font-size:9.85px;color:#222;font-weight:bold;">Markers</div><div class="btn" style="left:58px;top:502px;width:45px;height:17px;border-color:#2c5c9c;box-shadow:inset 0 0 0 1px #a8c0e8"><div class="t" style="left:0;width:100%;top:3.12px;font-size:9.89px;text-align:center">Define</div></div><svg class="a" style="left:113px;top:508px" width="10" height="7"><path d="M0.5 0.5 L9.5 0.5 L5 6.5Z" fill="#a8acc8"/><path d="M2 0.5 L5 5 L8 0.5" fill="none" stroke="#8088b0" stroke-width="1"/></svg><div class="t" style="left:127.10px;top:506.46px;font-size:8.55px;">MR</div><div class="a" style="left:167px;top:501px;width:70px;height:18px;border:1px solid #7f9db9;background:#fff"></div><div class="t" style="left:170.60px;top:504.99px;font-size:9.70px;">Time</div><div class="a" style="left:223px;top:503px;width:13px;height:14px;border-radius:2px;background:linear-gradient(#c8d4f4,#b0c0ec)"></div><svg class="a" style="left:225px;top:506px" width="10" height="8"><path d="M1.5 1.5 L4.5 5 L7.5 1.5" fill="none" stroke="#4d6185" stroke-width="1.8"/></svg><div class="a" style="left:236px;top:501px;width:88px;height:18px;border:1px solid #7f9db9;background:#fff"></div><div class="t" style="left:238.60px;top:504.85px;font-size:9.86px;">182.954 us</div><div class="btn" style="left:332px;top:502px;width:55px;height:17px;"><div class="t" style="left:0;width:100%;top:3.01px;font-size:10.03px;text-align:center">To Center</div></div><div class="btn" style="left:395px;top:502px;width:36px;height:17px;"><div class="t" style="left:0;width:100%;top:3.59px;font-size:9.35px;text-align:center">Peak</div></div><div class="btn" style="left:439px;top:502px;width:17px;height:17px"><svg class="a" style="left:0;top:0" width="15" height="15"><path d="M3 7.5L7.5 3L7.5 12Z M7 6H10.5V9H7Z" fill="#0c1450"/></svg></div><div class="btn" style="left:464px;top:502px;width:17px;height:17px"><svg class="a" style="left:0;top:0" width="15" height="15"><path d="M12 7.5L7.5 3L7.5 12Z M4.5 6H8V9H4.5Z" fill="#0c1450"/></svg></div><div class="btn" style="left:489px;top:502px;width:17px;height:17px"><svg class="a" style="left:0;top:0" width="15" height="15"><path d="M7.5 12L3 7.5H12Z M6 3.5H9V8H6Z" fill="#0c1450"/></svg></div><div class="btn" style="left:514px;top:502px;width:17px;height:17px"><svg class="a" style="left:0;top:0" width="15" height="15"><path d="M7.5 3L3 7.5H12Z M6 7H9V11.5H6Z" fill="#0c1450"/></svg></div><div class="btn" style="left:540px;top:502px;width:41px;height:17px;border-color:#2c5c9c;box-shadow:inset 0 0 0 1px #a8c0e8"><div class="t" style="left:0;width:100%;top:3.25px;font-size:9.75px;text-align:center">Table</div></div><div class="btn" style="left:771px;top:502px;width:22px;height:17px;"><div class="t" style="left:0;width:100%;top:3.29px;font-size:9.70px;text-align:center"><b>X</b></div></div><div class="a" style="left:0;top:523px;width:800px;height:1px;background:#cfcbbc"></div><div class="a" style="left:0;top:524px;width:800px;height:16px;background:#ebe8dc"></div><div class="a" style="left:77px;top:525px;width:1px;height:15px;background:#cdc9b8"></div><div class="a" style="left:78px;top:525px;width:1px;height:15px;background:#fff"></div><div class="a" style="left:299px;top:525px;width:1px;height:15px;background:#cdc9b8"></div><div class="a" style="left:300px;top:525px;width:1px;height:15px;background:#fff"></div><div class="a" style="left:352px;top:525px;width:1px;height:15px;background:#cdc9b8"></div><div class="a" style="left:353px;top:525px;width:1px;height:15px;background:#fff"></div><div class="a" style="left:425px;top:525px;width:1px;height:15px;background:#cdc9b8"></div><div class="a" style="left:426px;top:525px;width:1px;height:15px;background:#fff"></div><div class="a" style="left:582px;top:525px;width:1px;height:15px;background:#cdc9b8"></div><div class="a" style="left:583px;top:525px;width:1px;height:15px;background:#fff"></div><div class="t" style="left:1.60px;top:527.64px;font-size:9.88px;">Stopped</div><div class="t" style="left:80.60px;top:527.71px;font-size:9.80px;">Acq BW: 1.20 GHz, Acq Length: 200.000 us</div><div class="t" style="left:302.40px;top:528.03px;font-size:9.42px;">Real Time</div><div class="t" style="left:429.10px;top:527.95px;font-size:9.51px;">Scope sample rate 50.000 GHz</div></body></html>
